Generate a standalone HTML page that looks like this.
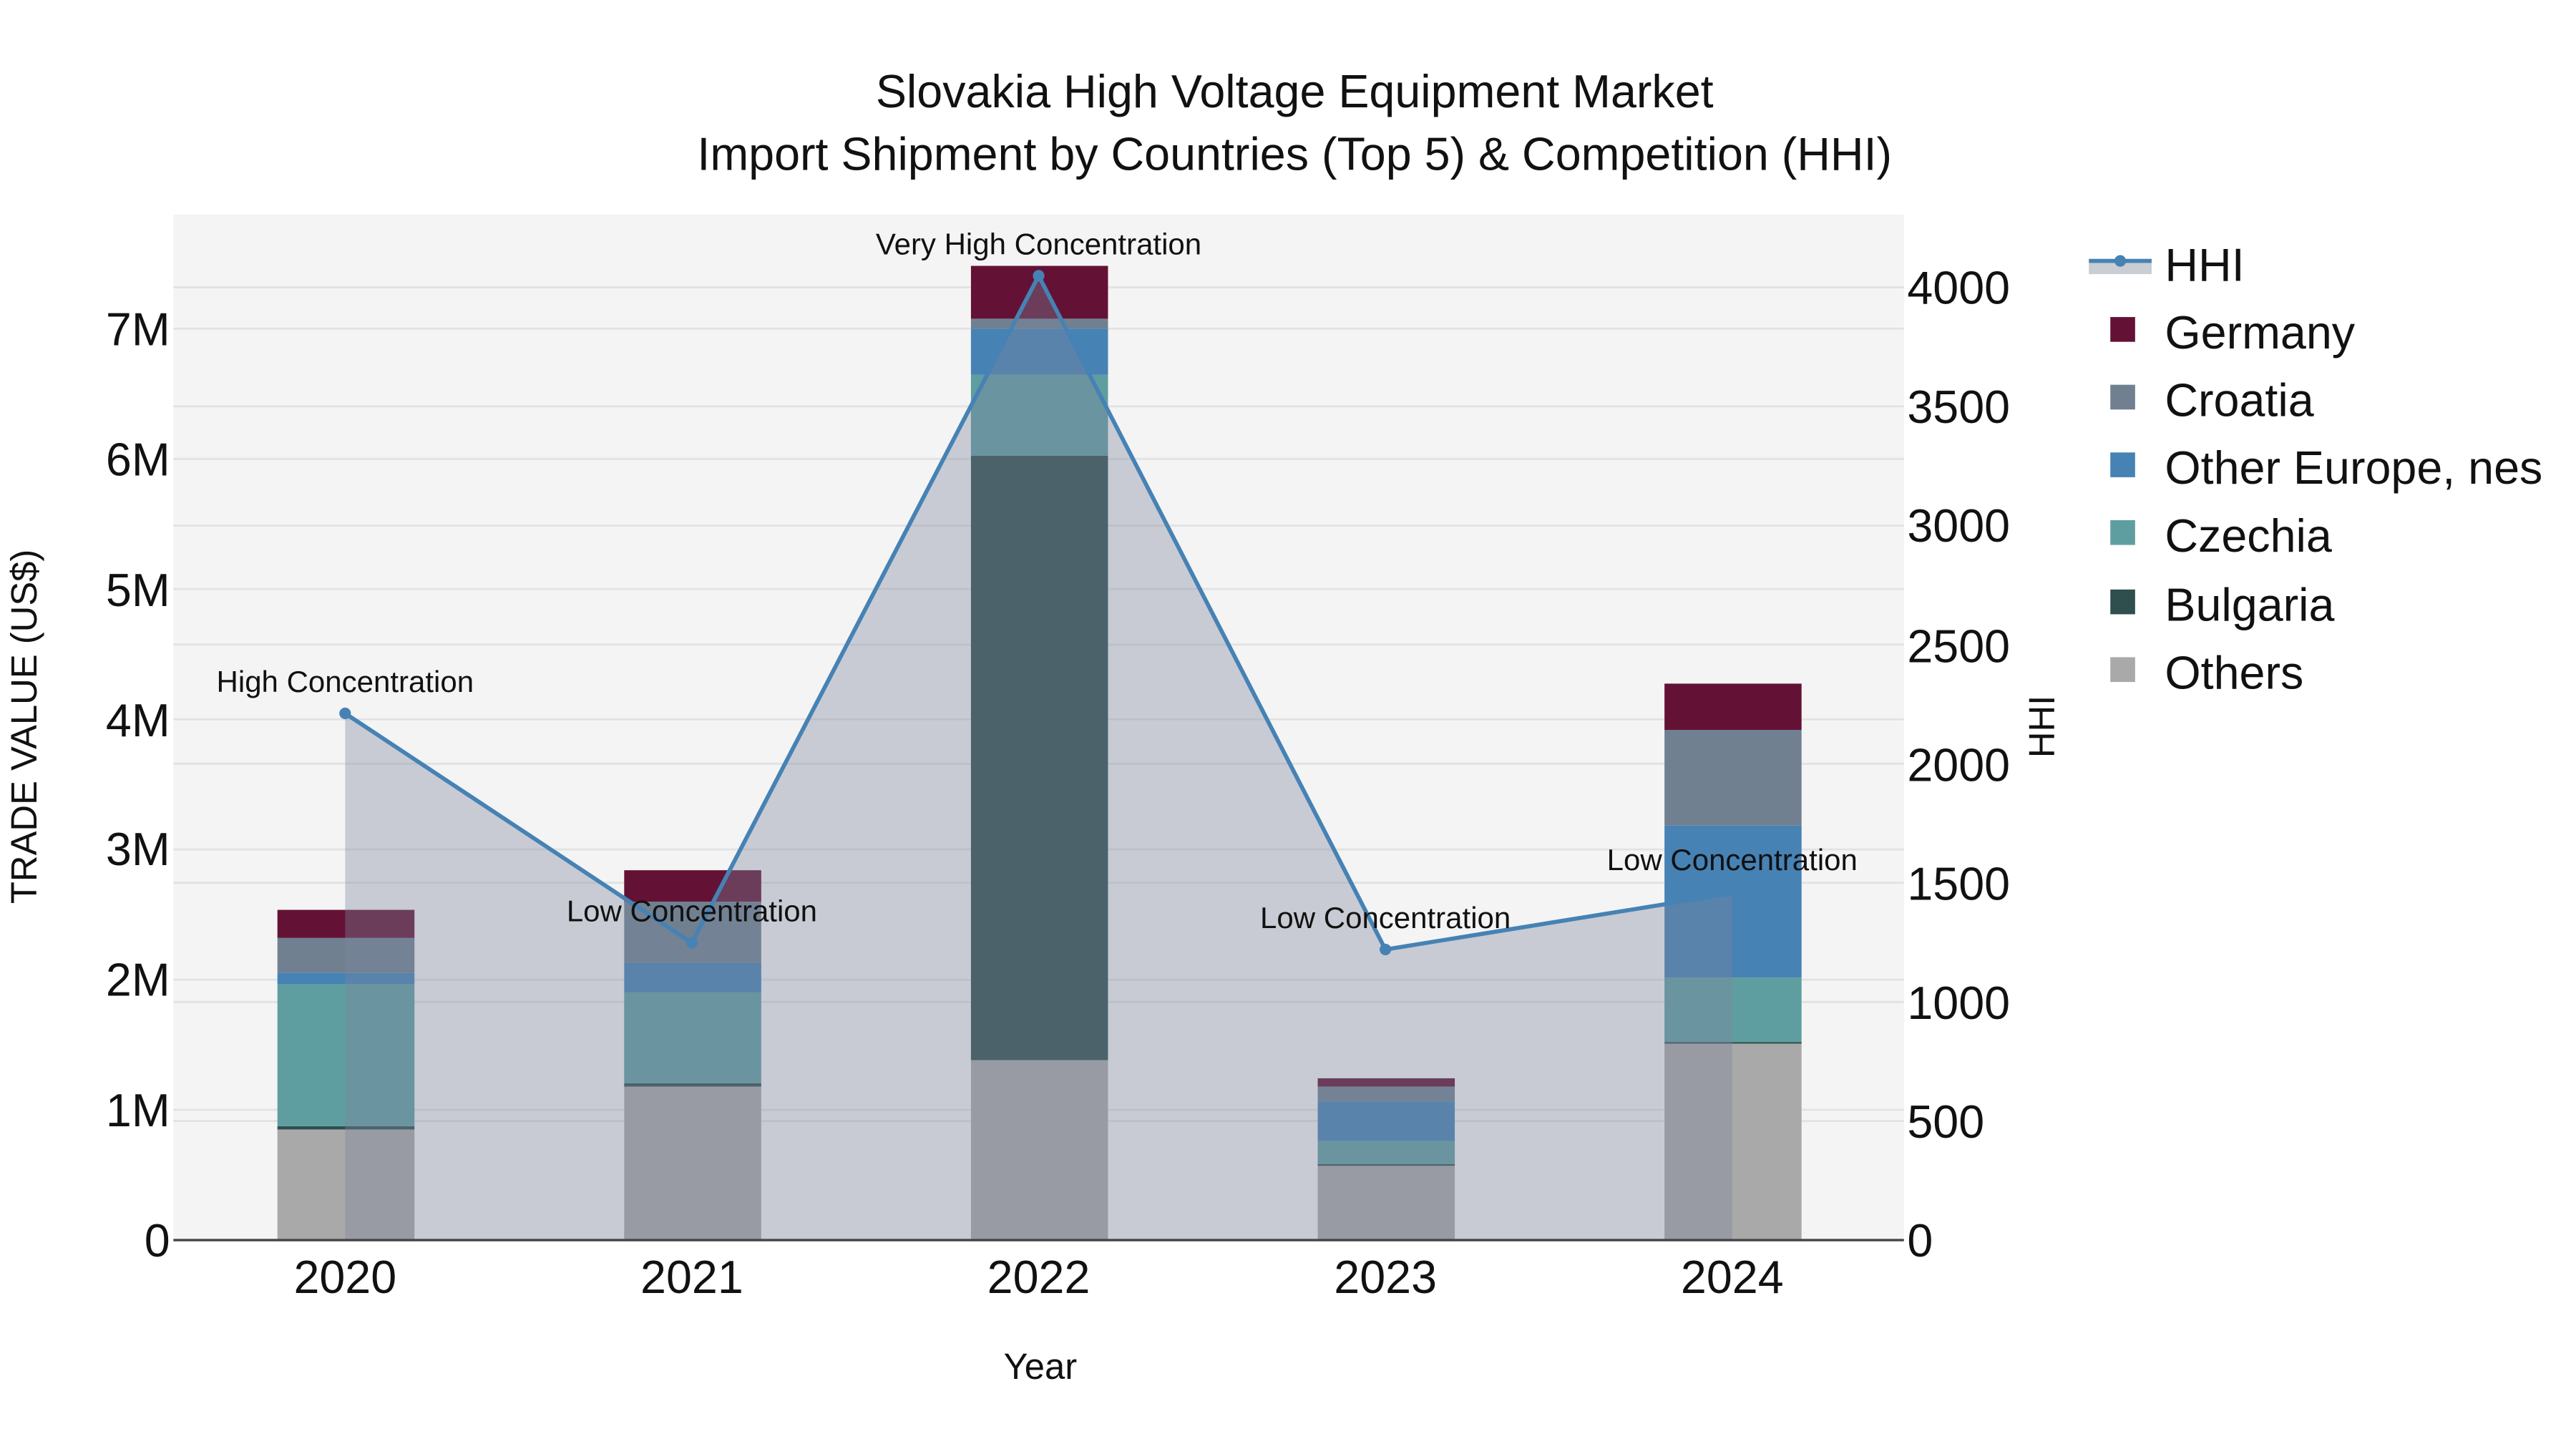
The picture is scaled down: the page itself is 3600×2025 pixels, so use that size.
<!DOCTYPE html>
<html><head><meta charset="utf-8"><style>
html,body{margin:0;padding:0;background:#fff;}
svg{display:block;font-family:"Liberation Sans",sans-serif;}
</style></head><body>
<svg width="3600" height="2025" viewBox="0 0 1560 877.5" xmlns="http://www.w3.org/2000/svg">
<rect width="1560" height="877.5" fill="#fff"/>
<rect x="105" y="130" width="1048" height="621" fill="#f4f4f4"/>
<g stroke="#e2e2e2" stroke-width="1.2">
<line x1="105" x2="1153" y1="672.1" y2="672.1"/><line x1="105" x2="1153" y1="593.3" y2="593.3"/>
<line x1="105" x2="1153" y1="514.4" y2="514.4"/><line x1="105" x2="1153" y1="435.6" y2="435.6"/>
<line x1="105" x2="1153" y1="356.7" y2="356.7"/><line x1="105" x2="1153" y1="277.9" y2="277.9"/>
<line x1="105" x2="1153" y1="199" y2="199"/>
<line x1="105" x2="1153" y1="678.9" y2="678.9"/><line x1="105" x2="1153" y1="606.8" y2="606.8"/>
<line x1="105" x2="1153" y1="534.6" y2="534.6"/><line x1="105" x2="1153" y1="462.5" y2="462.5"/>
<line x1="105" x2="1153" y1="390.4" y2="390.4"/><line x1="105" x2="1153" y1="318.3" y2="318.3"/>
<line x1="105" x2="1153" y1="246.1" y2="246.1"/><line x1="105" x2="1153" y1="174" y2="174"/>
</g>
<g>
<rect x="168" y="684" width="83" height="67" fill="#a9a9a9"/><rect x="168" y="682" width="83" height="2" fill="#2f4f4f"/><rect x="168" y="596" width="83" height="86" fill="#5f9ea0"/><rect x="168" y="589" width="83" height="7" fill="#4682b4"/><rect x="168" y="568" width="83" height="21" fill="#708090"/><rect x="168" y="551" width="83" height="17" fill="#631235"/>
<rect x="378" y="658" width="83" height="93" fill="#a9a9a9"/><rect x="378" y="656" width="83" height="2" fill="#2f4f4f"/><rect x="378" y="601" width="83" height="55" fill="#5f9ea0"/><rect x="378" y="583" width="83" height="18" fill="#4682b4"/><rect x="378" y="546" width="83" height="37" fill="#708090"/><rect x="378" y="527" width="83" height="19" fill="#631235"/>
<rect x="588" y="642" width="83" height="109" fill="#a9a9a9"/><rect x="588" y="276" width="83" height="366" fill="#2f4f4f"/><rect x="588" y="227" width="83" height="49" fill="#5f9ea0"/><rect x="588" y="199" width="83" height="28" fill="#4682b4"/><rect x="588" y="193" width="83" height="6" fill="#708090"/><rect x="588" y="161" width="83" height="32" fill="#631235"/>
<rect x="798" y="706" width="83" height="45" fill="#a9a9a9"/><rect x="798" y="705" width="83" height="1" fill="#2f4f4f"/><rect x="798" y="691" width="83" height="14" fill="#5f9ea0"/><rect x="798" y="667" width="83" height="24" fill="#4682b4"/><rect x="798" y="658" width="83" height="9" fill="#708090"/><rect x="798" y="653" width="83" height="5" fill="#631235"/>
<rect x="1008" y="632" width="83" height="119" fill="#a9a9a9"/><rect x="1008" y="631" width="83" height="1" fill="#2f4f4f"/><rect x="1008" y="592" width="83" height="39" fill="#5f9ea0"/><rect x="1008" y="500" width="83" height="92" fill="#4682b4"/><rect x="1008" y="442" width="83" height="58" fill="#708090"/><rect x="1008" y="414" width="83" height="28" fill="#631235"/>
</g>
<polygon points="209,751 209,432 419,571 629,167 839,575 1049,541 1049,751" fill="rgba(126,134,158,0.37)"/>
<polyline points="209,432 419,571 629,167 839,575 1049,541" fill="none" stroke="#4682b4" stroke-width="2.5"/>
<g fill="#4682b4"><circle cx="209" cy="432" r="3.5"/><circle cx="419" cy="571" r="3.5"/><circle cx="629" cy="167" r="3.5"/><circle cx="839" cy="575" r="3.5"/></g>
<line x1="105" x2="1153" y1="751" y2="751" stroke="#444" stroke-width="1.5"/>
<g font-size="18.2" text-anchor="middle" fill="#111">
<text x="209" y="419">High Concentration</text>
<text x="419" y="558">Low Concentration</text>
<text x="629" y="154">Very High Concentration</text>
<text x="839" y="562">Low Concentration</text>
<text x="1049" y="527">Low Concentration</text>
</g>
<g font-size="28" fill="#111" text-anchor="end">
<text x="103" y="761">0</text><text x="103" y="682">1M</text><text x="103" y="603">2M</text><text x="103" y="524">3M</text><text x="103" y="446">4M</text><text x="103" y="367">5M</text><text x="103" y="288">6M</text><text x="103" y="209">7M</text>
</g>
<g font-size="28" fill="#111">
<text x="1155" y="761">0</text><text x="1155" y="689">500</text><text x="1155" y="617">1000</text><text x="1155" y="545">1500</text><text x="1155" y="473">2000</text><text x="1155" y="401">2500</text><text x="1155" y="328">3000</text><text x="1155" y="256">3500</text><text x="1155" y="184">4000</text>
</g>
<g font-size="28" fill="#111" text-anchor="middle">
<text x="209" y="783">2020</text><text x="419" y="783">2021</text><text x="629" y="783">2022</text><text x="839" y="783">2023</text><text x="1049" y="783">2024</text>
<text x="784" y="65">Slovakia High Voltage Equipment Market</text>
<text x="784" y="103">Import Shipment by Countries (Top 5) &amp; Competition (HHI)</text>
</g>
<text x="630" y="835" font-size="22" fill="#111" text-anchor="middle">Year</text>
<text transform="translate(22,440) rotate(-90)" font-size="22" fill="#111" text-anchor="middle">TRADE VALUE (US$)</text>
<text transform="translate(1244,440) rotate(-90)" font-size="22" fill="#111" text-anchor="middle">HHI</text>
<rect x="1265" y="159" width="38" height="7" fill="#c9cdd4"/>
<line x1="1265" x2="1303" y1="158" y2="158" stroke="#4682b4" stroke-width="2.5"/>
<circle cx="1284" cy="158" r="3.5" fill="#4682b4"/>
<g font-size="28" fill="#111">
<text x="1311" y="170">HHI</text><text x="1311" y="211">Germany</text><text x="1311" y="252">Croatia</text><text x="1311" y="293">Other Europe, nes</text><text x="1311" y="334">Czechia</text><text x="1311" y="376">Bulgaria</text><text x="1311" y="417">Others</text>
</g>
<rect x="1278" y="192" width="15" height="15" fill="#631235"/>
<rect x="1278" y="233" width="15" height="15" fill="#708090"/>
<rect x="1278" y="274" width="15" height="15" fill="#4682b4"/>
<rect x="1278" y="315" width="15" height="15" fill="#5f9ea0"/>
<rect x="1278" y="357" width="15" height="15" fill="#2f4f4f"/>
<rect x="1278" y="398" width="15" height="15" fill="#a9a9a9"/>
</svg>
</body></html>
